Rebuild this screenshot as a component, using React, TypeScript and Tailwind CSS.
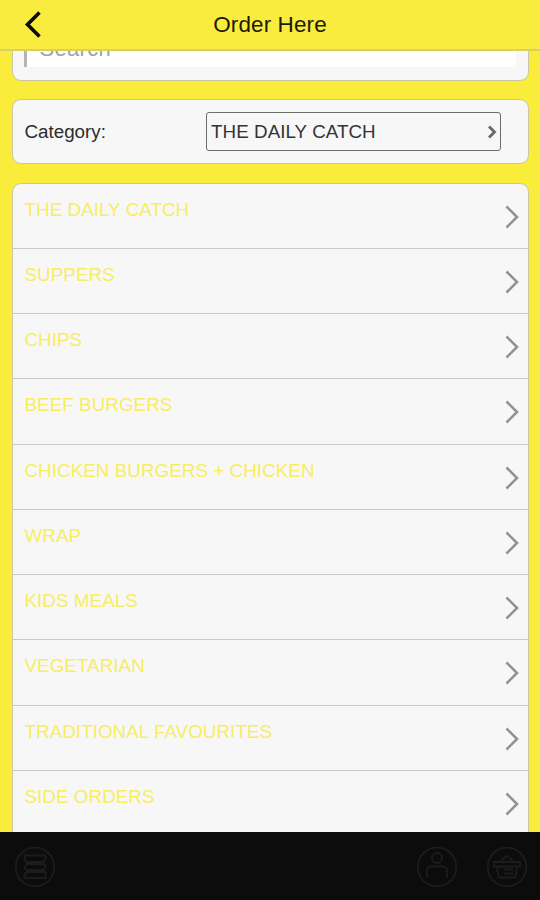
import React from 'react';

const CATEGORIES = [
  'THE DAILY CATCH',
  'SUPPERS',
  'CHIPS',
  'BEEF BURGERS',
  'CHICKEN BURGERS + CHICKEN',
  'WRAP',
  'KIDS MEALS',
  'VEGETARIAN',
  'TRADITIONAL FAVOURITES',
  'SIDE ORDERS',
];

const Header: React.FC<{ title: string }> = ({ title }) => (
  <header className="relative z-10 grid h-[51px] shrink-0 grid-cols-[1fr_auto_1fr] items-center border-b-2 border-[#d8ce6a] bg-[#f9ec3e]">
    <button aria-label="Back" className="ml-[24px] w-[20px]">
      <svg width="20" height="28" viewBox="0 0 20 28" fill="none" stroke="#0a0a00" strokeWidth="3.6">
        <path d="M15.5 1.5 3.500 13.500l12 12" />
      </svg>
    </button>
    <h1 className="pt-px text-[22.5px] leading-[28px] tracking-[0.1px] text-[#1c1b08]">{title}</h1>
  </header>
);

const SearchCard: React.FC = () => (
  <div className="-mt-[26px] h-[56px] shrink-0 rounded-[9px] border-[1.5px] border-[#cbc6a4] bg-[#f7f7f7] pl-[11px] pr-[12px]">
    <div className="flex h-[41px] items-center border-l-[3px] border-[#b4b4b4] bg-white pl-[13px]">
      <span className="pt-[5px] text-[22px] leading-[26px] tracking-[0.3px] text-[#a3a3a3]">Search</span>
    </div>
  </div>
);

const CategorySelect: React.FC<{ value: string }> = ({ value }) => (
  <div className="mt-[18px] flex h-[65px] shrink-0 items-center rounded-[9px] border-[1.5px] border-[#cbc6a4] bg-[#f7f7f7] pl-[12px] pr-[27px]">
    <span className="flex-1 pt-px text-[18.8px] text-[#2c2c2c]">Category:</span>
    <div className="flex h-[39px] w-[295px] items-center justify-between rounded-[3px] border border-[#6c6c6c] pl-[4px] pr-[3px]">
      <span className="pt-[2px] text-[18.8px] tracking-[0.06px] text-[#333333]">{value}</span>
      <svg width="10" height="14" viewBox="0 0 10 14" fill="none" stroke="#686868" strokeWidth="2.8">
        <path d="m2 1.5 5.5 5.5L2 12.5" />
      </svg>
    </div>
  </div>
);

const CategoryRow: React.FC<{ name: string }> = ({ name }) => (
  <li className="flex h-[65.25px] justify-between border-b-[1.5px] border-[#c9c9c9] pl-[12px] pr-[8px]">
    <span className="pt-[12px] text-[18.8px] leading-[28px] tracking-[0.06px] text-[#f8ed61]">{name}</span>
    <svg className="mt-[20px]" width="16" height="26" viewBox="0 0 16 26" fill="none" stroke="#929292" strokeWidth="2.6">
      <path d="M2.5 2.5 13 13 2.5 23.5" />
    </svg>
  </li>
);

const BottomBar: React.FC = () => (
  <footer className="relative z-10 flex h-[68px] shrink-0 items-center bg-[#0c0c0c] pl-[14px] pr-[12px] pt-px text-[#1c1c1c]">
    <svg width="42" height="42" viewBox="0 0 42 42" fill="none" stroke="currentColor" strokeWidth="1.8">
      <circle cx="21" cy="21" r="19.3" />
      <path d="M10.5 9.500h20.500l1.500 2-3 4.500h-17l-2-2zM12.500 18h17l2 2-2 4h-17l-2-2zM12.500 26h19v6h-21v-4z" />
    </svg>
    <svg className="ml-auto" width="42" height="42" viewBox="0 0 42 42" fill="none" stroke="currentColor" strokeWidth="1.8">
      <circle cx="21" cy="21" r="19.3" />
      <circle cx="21" cy="12" r="5" />
      <path d="M11 32v-7.5a4 4 0 0 1 4-4h12a4 4 0 0 1 4 4V32" />
    </svg>
    <svg className="ml-[28px]" width="42" height="42" viewBox="0 0 42 42" fill="none" stroke="currentColor" strokeWidth="1.8">
      <circle cx="21" cy="21" r="19.3" />
      <path d="M8 16h26v4.500H8zM10.500 20.500l2.500 11h16l2.500-11M14 16l7-6.500 7 6.500M18 23.500h9M18 27.500h9" />
    </svg>
  </footer>
);

export default function App() {
  return (
    <div className="flex h-[900px] w-[540px] flex-col overflow-hidden bg-[#f9ec3a] font-['Liberation_Sans',Arial,sans-serif]">
      <Header title="Order Here" />
      <main className="flex min-h-0 flex-1 flex-col overflow-hidden pl-[11.5px] pr-[11px]">
        <SearchCard />
        <CategorySelect value="THE DAILY CATCH" />
        <ul className="mt-[18.5px] shrink-0 rounded-t-[9px] border-[1.5px] border-[#cbc6a4] bg-[#f7f7f7]">
          {CATEGORIES.map((name) => (
            <CategoryRow key={name} name={name} />
          ))}
        </ul>
      </main>
      <BottomBar />
    </div>
  );
}
